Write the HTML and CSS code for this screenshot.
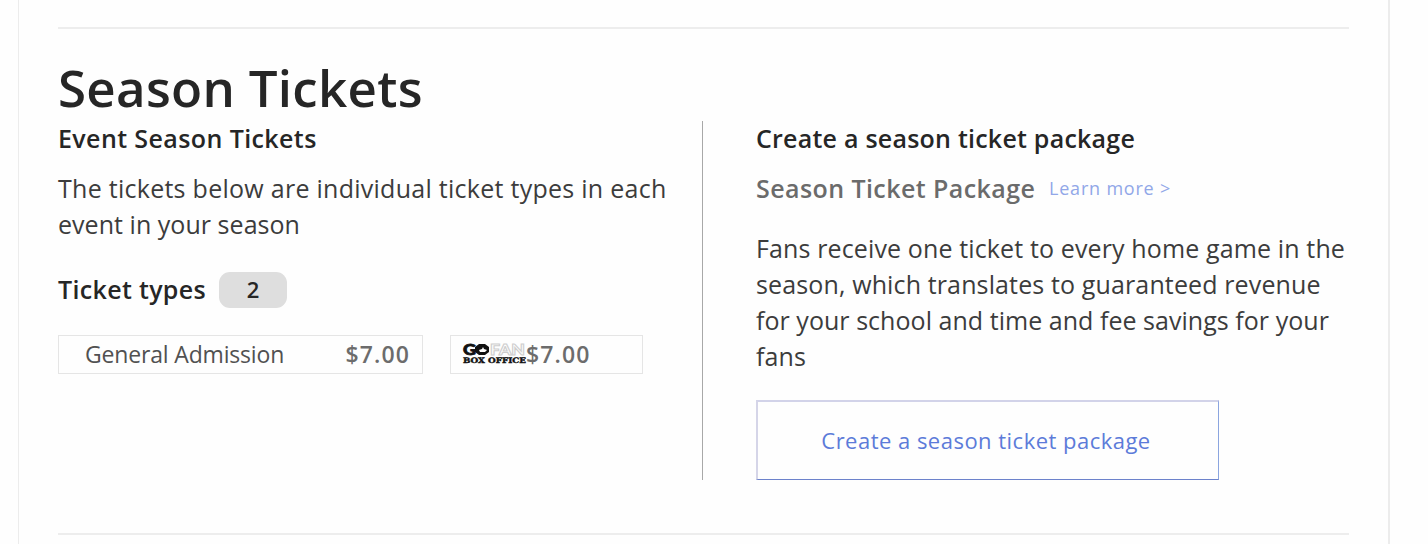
FILE: index.html
```html
<!DOCTYPE html>
<html lang="en">
<head>
<meta charset="utf-8">
<title>Season Tickets</title>
<link rel="stylesheet" href="styles.css">
</head>
<body>
<main class="panel">
  <section class="season">
    <h1 class="title">Season Tickets</h1>
    <div class="columns">
      <div class="event">
        <h2 class="heading event-heading">Event Season Tickets</h2>
        <p class="copy event-copy">The tickets below are individual ticket types in each<br><span class="copy-end">event in your season</span></p>
        <div class="types">
          <h2 class="heading types-heading">Ticket types</h2>
          <span class="count">2</span>
        </div>
        <div class="tickets">
          <div class="ticket ticket-ga">
            <span class="ticket-name">General Admission</span>
            <span class="price">$7.00</span>
          </div>
          <div class="ticket ticket-logo">
            <svg class="logo" width="63" height="22" viewBox="0 0 63 22" role="img" aria-label="GoFan Box Office">
              <text class="logo-go" x="0" y="12" textLength="13" lengthAdjust="spacingAndGlyphs">G</text>
              <path class="logo-o" fill-rule="evenodd" d="M16 1h6l4 3v5l-4 3h-6l-4-3V4zM16 7l3-1 1-2 1 2 3 1-2 2h-5z"/>
              <text class="logo-fan" x="27" y="12" textLength="35" lengthAdjust="spacingAndGlyphs">FAN</text>
              <text class="logo-box" x="0" y="20.3" textLength="63" lengthAdjust="spacingAndGlyphs">BOX OFFICE</text>
            </svg>
            <span class="price">$7.00</span>
          </div>
        </div>
      </div>
      <div class="package">
        <h2 class="heading package-heading">Create a season ticket package</h2>
        <div class="package-row">
          <h3 class="package-name">Season Ticket Package</h3>
          <a class="learn">Learn more &gt;</a>
        </div>
        <p class="copy package-copy">Fans receive one ticket to every home game in the<br>season, which translates to guaranteed revenue<br><span class="copy-end">for your school and time and fee savings for your</span><br>fans</p>
        <button class="create" type="button">Create a season ticket package</button>
      </div>
    </div>
  </section>
</main>
</body>
</html>
```
FILE: styles.css
```css
* { box-sizing: border-box; }
body {
  margin: 0;
  height: 544px;
  overflow: hidden;
  background: #fefefe;
  color: #262626;
  font-family: "Open Sans", "Noto Sans", sans-serif;
}
h1, h2, h3, p { margin: 0; font-weight: 600; white-space: nowrap; }
.panel {
  width: 1372px;
  height: 544px;
  margin-left: 18px;
  padding: 27px 39px 0;
  border: solid #ececec;
  border-width: 0 2px 0 1px;
}
.season {
  width: 1291px;
  height: 508px;
  border: solid #ededed;
  border-width: 2px 0;
}
.title {
  height: 92px;
  padding-top: 22px;
  font-size: 51px;
  font-weight: 650;
  line-height: 72px;
  letter-spacing: .3px;
}
.columns { display: flex; height: 359px; }
.event { width: 645px; margin-top: 0; border-right: 1px solid #a8a8a8; }
.package { padding-left: 53px; }
.heading { height: 36px; font-size: 25px; line-height: 34px; }
.event-heading { letter-spacing: .4px; }
.package-heading { letter-spacing: .23px; }
.copy { font-size: 25px; line-height: 36px; font-weight: 400; color: #3c3c3c; }
.copy-end { letter-spacing: .04px; }
.event-copy { margin-top: 13px; letter-spacing: .27px; }
.types { display: flex; align-items: center; gap: 13px; margin-top: 30px; }
.types-heading { width: 148px; letter-spacing: .33px; }
.count {
  width: 68px;
  height: 36px;
  border-radius: 11px;
  background: #dedede;
  font-size: 22px;
  font-weight: 600;
  line-height: 34px;
  text-align: center;
}
.tickets { display: flex; gap: 27px; margin-top: 27px; }
.ticket { display: flex; align-items: center; height: 39px; padding-bottom: 1px; border: 1px solid #e5e5e5; }
.ticket-ga { width: 365px; justify-content: space-between; padding-right: 12px; padding-left: 26px; }
.ticket-logo { width: 193px; padding-left: 12px; }
.ticket-name { font-size: 23px; letter-spacing: -.17px; color: #515151; white-space: nowrap; }
.price { font-size: 23px; font-weight: 600; letter-spacing: 1.1px; color: #6c6c6c; }
.logo { overflow: visible; flex: none; }
.logo-go { font: 900 15px Lato, sans-serif; fill: #111; stroke: #111; stroke-width: .8; }
.logo-o { fill: #111; }
.logo-fan { font: 900 15px Lato, sans-serif; fill: #fefefe; stroke: #cecece; stroke-width: 1; }
.logo-box { font: 700 7.5px "DejaVu Serif", serif; fill: #111; stroke: #111; stroke-width: .4; }
.package-row { display: flex; align-items: center; gap: 13px; height: 36px; margin-top: 13px; }
.package-name { width: 280px; font-size: 25px; line-height: 36px; letter-spacing: .42px; color: #6b6b6b; }
.learn { font-size: 18px; letter-spacing: .8px; color: #91a7e8; white-space: nowrap; }
.package-copy { margin-top: 24px; letter-spacing: .13px; }
.create {
  display: block;
  width: 463px;
  height: 80px;
  margin-top: 26px;
  margin-left: 0;
  padding: 0 4px 2px 0;
  border: solid;
  border-color: #d2d3e9 #8ba5df #6c82cb #d5d5e8;
  border-width: 2px 1px 1px 2px;
  background: transparent;
  font: 400 22px "Open Sans", sans-serif;
  letter-spacing: .48px;
  color: #5c7bd9;
  white-space: nowrap;
}
```
